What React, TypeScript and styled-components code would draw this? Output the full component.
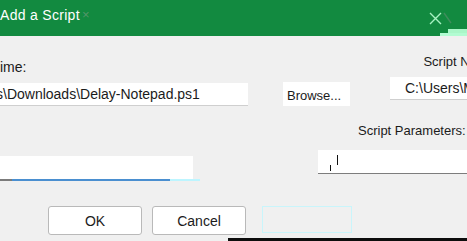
import React from "react";
import styled, { createGlobalStyle } from "styled-components";

const Global = createGlobalStyle`
  html, body { margin: 0; padding: 0; background: #f0f0f0; }
  body { font-family: "Liberation Sans", Arial, sans-serif; }
`;

const Window = styled.div`
  width: 467px;
  height: 241px;
  overflow: hidden;
  display: flex;
  flex-direction: column;
  background: #f0f0f0;
  color: #1b1b1b;
  font-family: "Liberation Sans", Arial, sans-serif;
`;

const TitleBar = styled.div`
  position: relative;
  height: 36px;
  flex-shrink: 0;
  background: #128a40;
  display: flex;
  align-items: flex-start;
  padding-top: 7px;
  box-sizing: border-box;
`;

const Title = styled.span`
  margin-left: 0;
  font-size: 14px;
  line-height: 16px;
  letter-spacing: 0.3px;
  color: #ffffff;
  white-space: nowrap;
`;

const Smudge = styled.span`
  margin-left: 2px;
  font-size: 13px;
  line-height: 16px;
  color: rgba(140, 160, 145, 0.55);
`;

const CloseIcon = styled.svg`
  margin-left: auto;
  margin-right: 14px;
  margin-top: 5px;
  flex-shrink: 0;
`;

const AccentTab = styled.div`
  position: absolute;
  right: 0;
  bottom: 0;
  width: 27px;
  height: 3px;
  background: #b2fcd2;
  &::after {
    content: "";
    position: absolute;
    right: 0;
    bottom: 3px;
    width: 19px;
    height: 4px;
    background: #a9f6c8;
  }
`;

const Body = styled.div`
  flex: 1;
  display: flex;
  flex-direction: column;
  overflow: hidden;
`;

const LabelRow = styled.div`
  margin-top: 18px;
  height: 23px;
  display: flex;
`;

const Label = styled.span<{ $end?: boolean; $left?: number; $size?: number }>`
  align-self: ${(p) => (p.$end ? "flex-end" : "flex-start")};
  margin-left: ${(p) => p.$left ?? 0}px;
  margin-bottom: ${(p) => (p.$end ? 2 : 0)}px;
  font-size: ${(p) => p.$size ?? 14}px;
  line-height: 16px;
  white-space: nowrap;
  flex-shrink: 0;
  color: #1b1b1b;
`;

const FieldRow = styled.div`
  height: 29px;
  display: flex;
`;

const TextBox = styled.div<{ $width?: number; $left?: number; $top?: boolean; $indent?: number }>`
  ${(p) => (p.$width ? `width: ${p.$width}px; flex-shrink: 0;` : "flex: 1; min-width: 0;")}
  height: 23px;
  margin-left: ${(p) => p.$left ?? 0}px;
  align-self: ${(p) => (p.$top ? "flex-start" : "flex-end")};
  box-sizing: border-box;
  background: #ffffff;
  border-bottom: 1px solid #cfcfcf;
  display: flex;
  align-items: center;
  padding-left: ${(p) => p.$indent ?? 0}px;
  font-size: 14px;
  white-space: nowrap;
  overflow: hidden;
`;

const BoxText = styled.span<{ $shift?: number }>`
  margin-left: ${(p) => p.$shift ?? 0}px;
  font-size: 14px;
  line-height: 16px;
  color: #1b1b1b;
  white-space: nowrap;
`;

const BrowseButton = styled.button`
  width: 67px;
  height: 24px;
  margin-left: 35px;
  align-self: flex-end;
  flex-shrink: 0;
  border: none;
  background: #ffffff;
  padding: 0 0 3px 4px;
  display: flex;
  align-items: flex-end;
  font-family: "Liberation Sans", Arial, sans-serif;
  font-size: 13px;
  line-height: 14px;
  color: #1b1b1b;
`;

const ParamLabelRow = styled.div`
  margin-top: 17px;
  display: flex;
  height: 16px;
`;

const ParamRow = styled.div`
  margin-top: 9px;
  height: 35px;
  display: flex;
`;

const ActiveBox = styled.div`
  width: 200px;
  height: 25px;
  margin-top: 8px;
  flex-shrink: 0;
  background:
    linear-gradient(to right, #7b7b7b 0 12px, #4a8fd0 12px 170px, #bdf5ff 170px 200px) bottom / 100% 2px no-repeat,
    linear-gradient(to right, #ffffff 0 193px, transparent 193px) top / 100% 23px no-repeat;
`;

const ParamBox = styled.div`
  flex: 1;
  height: 24px;
  margin-left: 118px;
  margin-top: 2px;
  box-sizing: border-box;
  background: #ffffff;
  border-bottom: 1px solid #7d7d7d;
  display: flex;
  align-items: flex-start;
  padding-left: 12px;
  gap: 6px;
`;

const Caret = styled.span<{ $top: number; $h: number }>`
  width: 1px;
  height: ${(p) => p.$h}px;
  margin-top: ${(p) => p.$top}px;
  background: #111111;
  flex-shrink: 0;
`;

const ButtonRow = styled.div`
  margin-top: 23px;
  height: 29px;
  display: flex;
`;

const DialogButton = styled.button<{ $left: number; $width: number }>`
  width: ${(p) => p.$width}px;
  height: 29px;
  margin-left: ${(p) => p.$left}px;
  flex-shrink: 0;
  box-sizing: border-box;
  border: 1px solid #b9b9b9;
  border-radius: 3px;
  background: #ffffff;
  font-family: "Liberation Sans", Arial, sans-serif;
  font-size: 14px;
  line-height: 16px;
  color: #1b1b1b;
  padding: 0;
`;

const GhostButton = styled.div`
  width: 90px;
  height: 27px;
  margin-left: 16px;
  box-sizing: border-box;
  border: 1px solid #c9f5fb;
`;

const BottomBar = styled.div`
  margin-top: auto;
  margin-left: 228px;
  height: 3px;
  background: #0d0d0d;
  flex-shrink: 0;
`;

export default function App() {
  return (
    <Window>
      <Global />
      <TitleBar>
        <Title>Add a Script</Title>
        <Smudge>×</Smudge>
        <CloseIcon width="24" height="13" viewBox="0 0 24 13">
          <path d="M1 1 L12 12 M12 1 L1 12" stroke="#a8f2c2" strokeWidth="1.4" fill="none" />
          <path d="M15 1 L22 11" stroke="#5f8f70" strokeOpacity="0.6" strokeWidth="1.4" fill="none" />
        </CloseIcon>
        <AccentTab />
      </TitleBar>
      <Body>
        <LabelRow>
          <Label $end>ime:</Label>
          <Label $left={397} $size={13}>Script Name:</Label>
        </LabelRow>
        <FieldRow>
          <TextBox $width={248}>
            <BoxText $shift={-4}>s\Downloads\Delay-Notepad.ps1</BoxText>
          </TextBox>
          <BrowseButton>Browse...</BrowseButton>
          <TextBox $left={40} $top $indent={15}>
            <BoxText>C:\Users\Mark\Downloads\Delay-Notepad.ps1</BoxText>
          </TextBox>
        </FieldRow>
        <ParamLabelRow>
          <Label $left={358} $size={13}>Script Parameters:</Label>
        </ParamLabelRow>
        <ParamRow>
          <ActiveBox />
          <ParamBox>
            <Caret $top={15} $h={6} />
            <Caret $top={5} $h={10} />
          </ParamBox>
        </ParamRow>
        <ButtonRow>
          <DialogButton $left={48} $width={94}>OK</DialogButton>
          <DialogButton $left={10} $width={94}>Cancel</DialogButton>
          <GhostButton />
        </ButtonRow>
        <BottomBar />
      </Body>
    </Window>
  );
}
